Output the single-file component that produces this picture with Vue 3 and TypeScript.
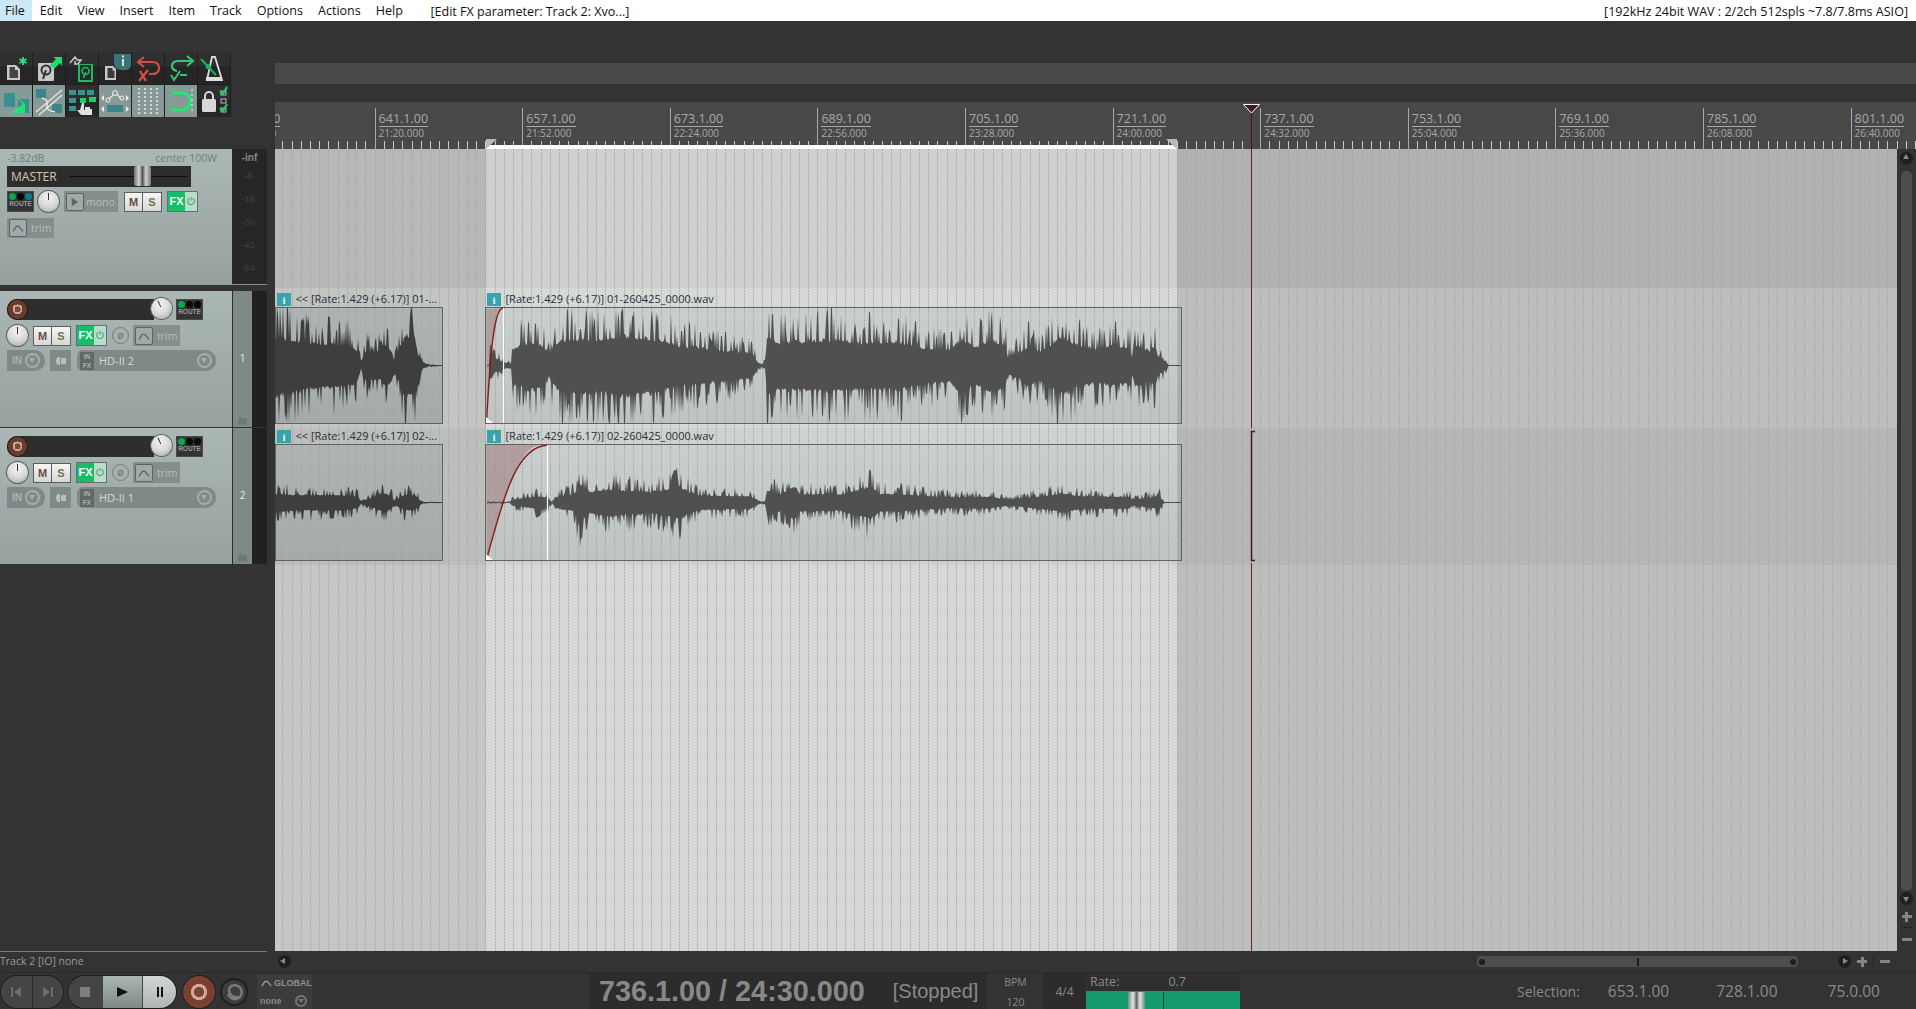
<script setup lang="ts">
import { computed } from "vue";

type Key = [number, number];

const menus = ["File", "Edit", "View", "Insert", "Item", "Track", "Options", "Actions", "Help"];
const tracks = [
  { n: 1, input: "HD-II 2" },
  { n: 2, input: "HD-II 1" },
];

const BAR_X = 374.6;
const BAR_W = 147.6;
const TICK = BAR_W / 16;

function barX(bar: number): number {
  return BAR_X + ((bar - 641) / 16) * BAR_W;
}

const rulerLabels = computed(() => {
  const out: { x: number; bar: string; time: string }[] = [];
  for (let i = 0; i < 12; i++) {
    const bar = 625 + i * 16;
    const secs = 20 * 60 + 48 + i * 32;
    const m = Math.floor(secs / 60);
    const s = String(secs % 60).padStart(2, "0");
    out.push({ x: barX(bar) - 275, bar: `${bar}.1.00`, time: `${m}:${s}.000` });
  }
  return out;
});

const ticks = computed(() => {
  const out: number[] = [];
  for (let x = BAR_X - 10 * TICK; x < 1916; x += TICK) out.push(Math.round(x) + 0.5);
  return out;
});

const gridLines = computed(() => ticks.value.filter((x) => x < 1897));

const majors = computed(() => rulerLabels.value.map((l) => Math.round(l.x + 275) + 0.5).filter((x) => x > 275));

function envAt(keys: Key[], x: number): number {
  for (let i = 1; i < keys.length; i++) {
    if (x <= keys[i][0]) {
      const [x0, a0] = keys[i - 1];
      const [x1, a1] = keys[i];
      return a0 + ((a1 - a0) * (x - x0)) / (x1 - x0 || 1);
    }
  }
  return keys[keys.length - 1][1];
}

// peak per pixel column: a solid core with thin spikes on top
function wave(keys: Key[], cy: number, half: number, seed: number): string {
  let s = seed;
  const rnd = () => {
    s = (s * 1664525 + 1013904223) % 4294967296;
    return s / 4294967296;
  };
  const peak = () => {
    const r = rnd();
    if (r > 0.62) return 0.68 + 0.5 * rnd();
    return 0.46 + 0.25 * r * r;
  };
  const x0 = keys[0][0];
  const x1 = keys[keys.length - 1][0];
  const up: string[] = [];
  const down: string[] = [];
  for (let x = x0; x <= x1; x++) {
    const e = envAt(keys, x) * half;
    const a = e * peak();
    const b = e * peak() * 1.05;
    up.push(`${x},${(cy - Math.min(half, Math.max(0.6, a))).toFixed(1)}`);
    down.unshift(`${x},${(cy + Math.min(half, Math.max(0.6, b))).toFixed(1)}`);
  }
  return `M${up.join("L")}L${down.join("L")}Z`;
}

const main1: Key[] = [[487, 0.01], [489, 0.02], [490, 0.48], [495, 0.25], [505, 0.1], [511, 0.08], [512, 0.55], [520, 0.72], [535, 0.82], [545, 0.6], [548, 0.3], [552, 0.6], [560, 0.88], [580, 0.88], [605, 0.92], [625, 1], [650, 0.92], [680, 0.68], [700, 0.62], [752, 0.42], [758, 0.1], [762, 0.05], [765, 0.1], [767, 1], [780, 0.78], [800, 0.82], [830, 0.88], [860, 0.78], [900, 0.82], [920, 0.62], [950, 0.55], [962, 0.92], [975, 0.62], [990, 0.88], [1005, 0.72], [1008, 0.3], [1020, 0.48], [1030, 0.68], [1040, 0.48], [1055, 0.82], [1060, 0.95], [1070, 0.88], [1075, 0.72], [1090, 0.62], [1100, 0.58], [1110, 0.68], [1125, 0.62], [1130, 0.68], [1132, 0.3], [1135, 0.68], [1150, 0.52], [1155, 0.68], [1158, 0.35], [1165, 0.15], [1169, 0.01], [1181, 0.01]];
const main2: Key[] = [[487, 0.02], [510, 0.02], [512, 0.1], [530, 0.18], [537, 0.22], [548, 0.16], [552, 0.02], [555, 0.15], [560, 0.22], [575, 0.3], [578, 0.68], [590, 0.36], [605, 0.46], [625, 0.42], [635, 0.42], [650, 0.36], [680, 0.56], [690, 0.36], [700, 0.25], [750, 0.22], [757, 0.08], [762, 0.03], [765, 0.05], [767, 0.42], [780, 0.3], [795, 0.56], [800, 0.3], [840, 0.28], [870, 0.56], [880, 0.3], [900, 0.3], [920, 0.25], [955, 0.18], [975, 0.2], [990, 0.2], [1008, 0.1], [1030, 0.18], [1050, 0.25], [1060, 0.32], [1080, 0.22], [1125, 0.2], [1130, 0.2], [1132, 0.1], [1155, 0.2], [1158, 0.32], [1163, 0.05], [1165, 0.01], [1181, 0.01]];
const left1: Key[] = [[275, 1], [310, 0.78], [350, 0.68], [358, 0.5], [361, 0.1], [365, 0.48], [380, 0.48], [385, 0.7], [392, 0.5], [394, 0.2], [398, 0.5], [405, 1], [415, 1], [418, 0.4], [423, 0.1], [428, 0.03], [442, 0.01]];
const left2: Key[] = [[275, 0.3], [300, 0.26], [340, 0.26], [358, 0.2], [361, 0.05], [375, 0.2], [385, 0.32], [392, 0.2], [394, 0.07], [405, 0.26], [415, 0.26], [420, 0.08], [424, 0.02], [442, 0.01]];

const waves = computed(() => ({
  main1: wave(main1, 365.5, 58, 11),
  main2: wave(main2, 502.5, 58, 29),
  left1: wave(left1, 365.5, 58, 47),
  left2: wave(left2, 502.5, 58, 73),
}));

const bands = [
  { y: 149, h: 139, c: ["#b7b8b7", "#ced0ce", "#b0b1b0"] },
  { y: 288, h: 140, c: ["#c3c5c3", "#d7d9d7", "#bdbebd"] },
  { y: 428, h: 137, c: ["#bcbebc", "#d0d2d0", "#b5b6b5"] },
  { y: 565, h: 386, c: ["#c5c7c5", "#d6d8d6", "#bdbebc"] },
];
const clips = [
  { x: 275.5, y: 307.5, w: 167, h: 116, left: true, label: "<< [Rate:1.429 (+6.17)] 01-...", labelY: 303 },
  { x: 275.5, y: 444.5, w: 167, h: 116, left: true, label: "<< [Rate:1.429 (+6.17)] 02-...", labelY: 440 },
  { x: 485.5, y: 307.5, w: 696, h: 116, left: false, label: "[Rate:1.429 (+6.17)] 01-260425_0000.wav", labelY: 303 },
  { x: 485.5, y: 444.5, w: 696, h: 116, left: false, label: "[Rate:1.429 (+6.17)] 02-260425_0000.wav", labelY: 440 },
];
</script>

<template>
  <div class="app">
    <div class="menu">
      <span v-for="m in menus" :key="m" class="menu-item" :class="{ on: m === 'File' }">{{ m }}</span>
      <span class="menu-undo">[Edit FX parameter: Track 2: Xvo...]</span>
      <span class="menu-info">[192kHz 24bit WAV : 2/2ch 512spls ~7.8/7.8ms ASIO]</span>
    </div>

    <div class="work">
      <div class="tcp">
        <div class="toolbar">
          <div class="tb">
            <svg viewBox="0 0 32 32"><path d="M7 13h9l4 4v11H7z" fill="#c8c8c8"/><path d="M9.500 15h5.500v3h3v8h-8.500z" fill="#444"/><path d="M23 5v8M19.500 7l7 4M26.500 7l-7 4" stroke="#2fe08a" stroke-width="1.800"/></svg>
          </div>
          <div class="tb">
            <svg viewBox="0 0 32 32"><rect x="5" y="11" width="16" height="18" rx="1" fill="#c8c8c8"/><circle cx="13" cy="18" r="4.500" fill="none" stroke="#333" stroke-width="2"/><path d="M13 18l-3 9" stroke="#333" stroke-width="2"/><path d="M17 13l6-6-3-2h9v9l-2-3-6 6z" fill="#1fdc6e"/></svg>
          </div>
          <div class="tb">
            <svg viewBox="0 0 32 32"><rect x="12" y="12" width="15" height="18" fill="#1fb964"/><rect x="14" y="13" width="11" height="15" fill="#2a2a2a"/><circle cx="19.500" cy="19" r="3.500" fill="none" stroke="#1fb964" stroke-width="1.600"/><path d="M19.500 20l-2 6" stroke="#1fb964" stroke-width="1.600"/><path d="M4 11l5-6 2 3h4l-3 4H9V9" fill="none" stroke="#ccc" stroke-width="1.500"/></svg>
          </div>
          <div class="tb">
            <svg viewBox="0 0 32 32"><path d="M6 14h8l3 3v11H6z" fill="#c8c8c8"/><path d="M8.500 16h5v2.500h2V26h-7z" fill="#3a3a3a"/><path d="M15 2h17v10q0 6-7 6h-3q-7-1-7-8z" fill="#3a7478"/><rect x="23" y="7" width="2" height="7" fill="#ddd"/><rect x="23" y="3.500" width="2" height="2" fill="#ddd"/></svg>
          </div>
          <div class="tb">
            <svg viewBox="0 0 32 32"><path d="M7 10h13q7 0 7 6t-7 6h-3" fill="none" stroke="#d84a45" stroke-width="2.200"/><path d="M12 5l-6 5 6 5" fill="none" stroke="#d84a45" stroke-width="2"/><path d="M8 19l6 10M16 18L7 29" stroke="#d84a45" stroke-width="2.400"/></svg>
          </div>
          <div class="tb">
            <svg viewBox="0 0 32 32"><path d="M26 9H14q-7 0-7 5 0 4 5 5" fill="none" stroke="#38c574" stroke-width="2.200"/><path d="M22 4l6 5-6 5" fill="none" stroke="#38c574" stroke-width="2"/><path d="M6 23l3 5 6-9M15 23h7" fill="none" stroke="#38c574" stroke-width="2"/></svg>
          </div>
          <div class="tb">
            <svg viewBox="0 0 32 32"><path d="M9 28L14 5h3l7 23z" fill="none" stroke="#ddd" stroke-width="1.800"/><path d="M3 7l15 16" stroke="#17b45a" stroke-width="2"/><circle cx="10" cy="14.500" r="2.500" fill="#17b45a"/><rect x="8" y="25" width="16" height="3" fill="#ddd"/></svg>
          </div>

          <div class="tb lit">
            <svg viewBox="0 0 32 32"><rect x="4" y="8" width="11" height="14" fill="#3a8f8f"/><rect x="18" y="14" width="11" height="14" fill="#3a8f8f"/><path d="M12 7l11 12-12 9h14V19z" fill="#1df06e" opacity=".9"/></svg>
          </div>
          <div class="tb lit">
            <svg viewBox="0 0 32 32"><rect x="3" y="4" width="10" height="9" fill="#3a8585"/><rect x="19" y="19" width="10" height="9" fill="#3a8585"/><path d="M3 27L29 5M6 30L29 10M9 13q7 2 5 7t8 7" fill="none" stroke="#e5e5e5" stroke-width="1.400"/></svg>
          </div>
          <div class="tb">
            <svg viewBox="0 0 32 32"><g fill="#3f8f8f"><rect x="3" y="5" width="7" height="5"/><rect x="12" y="5" width="7" height="5"/><rect x="21" y="5" width="7" height="5"/><rect x="3" y="13" width="7" height="5"/><rect x="3" y="21" width="7" height="5"/></g><rect x="14" y="13" width="6" height="5" fill="#1ad070"/><rect x="23" y="12" width="7" height="5" fill="#1ad070"/><path d="M16 18h2v7h1v-3h5v2h2v6H15l-4-5h3z" fill="#e0e0e0"/></svg>
          </div>
          <div class="tb lit">
            <svg viewBox="0 0 32 32"><path d="M9 15l6-6h3l5 6" fill="none" stroke="#eee" stroke-width="1.200"/><circle cx="9" cy="15" r="2" fill="#879a98" stroke="#eee"/><circle cx="16" cy="8" r="2.400" fill="#879a98" stroke="#eee"/><circle cx="23" cy="13" r="2" fill="#879a98" stroke="#eee"/><path d="M5 10l-3 3 3 3zM27 10l3 3-3 3zM5 21l-3 3 3 3zM27 21l3 3-3 3z" fill="#eee"/><rect x="8" y="20" width="16" height="7" fill="#3a8585"/></svg>
          </div>
          <div class="tb lit">
            <svg viewBox="0 0 32 32"><path d="M7 3v26M13 3v26M19 3v26M25 3v26" stroke="#e8e8e8" stroke-width="1.600" stroke-dasharray="2 2"/></svg>
          </div>
          <div class="tb lit">
            <svg viewBox="0 0 32 32"><path d="M8 8h9a8 8 0 0 1 0 17H8" fill="none" stroke="#1bec70" stroke-width="3"/><path d="M6 4v25" stroke="#1bec70" stroke-width="1.500" stroke-dasharray="2 3"/><path d="M27 4v25" stroke="#cfe" stroke-width="1" stroke-dasharray="2 3"/></svg>
          </div>
          <div class="tb">
            <svg viewBox="0 0 32 32"><rect x="4" y="14" width="14" height="13" rx="1.500" fill="#d8d8d8"/><path d="M7 14v-3a4 4 0 0 1 8 0v3" fill="none" stroke="#d8d8d8" stroke-width="2"/><g fill="none" stroke="#bbb"><rect x="23" y="6" width="5" height="4"/><rect x="23" y="14" width="5" height="4"/><rect x="23" y="23" width="5" height="4"/></g><path d="M22 6l3 3 4-7M22 23l3 3 4-7" fill="none" stroke="#1bd468" stroke-width="2"/></svg>
          </div>
        </div>

        <div class="master">
          <div class="master-strip">
            <div class="master-top"><span>-3.82dB</span><span>center 100W</span></div>
            <div class="master-fader">
              <span class="master-name">MASTER</span>
              <span class="fader-line"><i class="fader-thumb"></i></span>
            </div>
            <div class="row master-row">
              <div class="route">
                <div class="leds"><i class="g"></i><i></i><i class="b"></i></div>
                <b>ROUTE</b>
              </div>
              <div class="knob"><i></i></div>
              <div class="tag mono">
                <span class="tag-btn"><svg viewBox="0 0 12 12"><path d="M2 1v10l8-5z" fill="#5d6665"/></svg></span>
                <em>mono</em>
              </div>
              <div class="ms"><span class="m">M</span><span class="s">S</span></div>
              <div class="fx"><b>FX</b><span>⏻</span></div>
            </div>
            <div class="row master-row2">
              <div class="tag">
                <span class="tag-btn"><svg viewBox="0 0 14 12"><path d="M1 10l4-6h3l5 6" fill="none" stroke="#5b6463" stroke-width="1.600"/></svg></span>
                <em>trim</em>
              </div>
            </div>
          </div>
          <div class="meter">
            <span class="inf">-inf</span>
            <span>-6-</span><span>-18-</span><span>-30-</span><span>-42-</span><span>-54-</span>
          </div>
        </div>

        <div v-for="t in tracks" :key="t.n" class="track">
          <div class="track-strip">
            <div class="row r1">
              <div class="arm-bar">
                <span class="rec"></span>
                <div class="knob vol"><i></i></div>
              </div>
              <div class="route small">
                <div class="leds"><i class="g"></i><i></i><i></i></div>
                <b>ROUTE</b>
              </div>
            </div>
            <div class="row r2">
              <div class="knob"><i></i></div>
              <div class="ms"><span class="m">M</span><span class="s">S</span></div>
              <div class="fx"><b>FX</b><span>⏻</span></div>
              <span class="phase">ø</span>
              <div class="tag">
                <span class="tag-btn"><svg viewBox="0 0 14 12"><path d="M1 10l4-6h3l5 6" fill="none" stroke="#5b6463" stroke-width="1.600"/></svg></span>
                <em>trim</em>
              </div>
            </div>
            <div class="row r3">
              <div class="in-pill"><b>IN</b><span class="drop"></span></div>
              <div class="mon"><svg viewBox="0 0 12 14"><path d="M4 3Q1 3 1 7t3 4h1V3zM6 4h5v6H6z" fill="#b7c0bf"/></svg></div>
              <div class="input-pill">
                <span class="in-fx">IN<br />FX</span>
                <span class="input-name">{{ t.input }}</span>
                <span class="drop"></span>
              </div>
            </div>
          </div>
          <div class="track-num">
            <span>{{ t.n }}</span>
            <svg class="folder" viewBox="0 0 10 8"><path d="M0 0h5l1 1h4v7H0z" fill="#6e7877"/></svg>
          </div>
          <div class="track-dark"></div>
        </div>

        <div class="tcp-spacer"></div>
        <div class="tcp-status">Track 2 [IO] none</div>
      </div>

      <div class="main">
        <div class="strip"></div>
        <div class="ruler">
          <svg class="ruler-svg" width="1641" height="47" viewBox="275 102 1641 47">
            <path v-for="x in ticks" :key="x" :d="`M${x} 141V149`" stroke="#c9c9c9" />
            <path v-for="x in majors" :key="'m' + x" :d="`M${x} 108V149`" stroke="#a9a9a9" />
            <rect x="486" y="145" width="691" height="4" fill="#fff" />
            <path d="M486 149V139H497zM1177 149V139H1166z" fill="#b9b9b9" />
            <path d="M1243.500 104.500H1259.500L1251.500 113z" fill="#46181c" stroke="#fff" />
            <path d="M1251.500 113V149" stroke="#46181c" stroke-width="1" />
          </svg>
          <div v-for="l in rulerLabels" :key="l.bar" class="ruler-label" :style="{ left: l.x + 4 + 'px' }">
            <span class="bar">{{ l.bar }}</span>
            <span class="time">{{ l.time }}</span>
          </div>
        </div>

        <div class="canvas-row">
          <svg class="arrange" width="1622" height="802" viewBox="275 149 1622 802">
            <defs>
              <linearGradient id="clipA" x1="0" y1="0" x2="0" y2="1">
                <stop offset="0" stop-color="#c9cfcf" /><stop offset="1" stop-color="#bfc4c3" />
              </linearGradient>
              <linearGradient id="clipB" x1="0" y1="0" x2="0" y2="1">
                <stop offset="0" stop-color="#adb4b3" /><stop offset="1" stop-color="#a5abaa" />
              </linearGradient>
            </defs>
            <g v-for="b in bands" :key="b.y">
              <rect x="275" :y="b.y" width="211" :height="b.h" :fill="b.c[0]" />
              <rect x="486" :y="b.y" width="691" :height="b.h" :fill="b.c[1]" />
              <rect x="1177" :y="b.y" width="720" :height="b.h" :fill="b.c[2]" />
            </g>

            <rect v-for="c in clips" :key="'r' + c.label" :x="c.x" :y="c.y" :width="c.w" :height="c.h" :fill="c.left ? 'url(#clipB)' : 'url(#clipA)'" />
            <path v-for="x in gridLines" :key="x" :d="`M${x} 149V951`" stroke="#a2a4a2" stroke-opacity=".75" stroke-dasharray="2 1" />
            <rect x="1178" y="308" width="3" height="115" fill="#6b6f6e" opacity=".3" />
            <rect x="1178" y="445" width="3" height="115" fill="#6b6f6e" opacity=".3" />

            <g v-for="c in clips" :key="c.label">
              <rect :x="c.x" :y="c.y" :width="c.w" :height="c.h" fill="none" stroke="#5f6362" />
              <rect :x="c.x + 1.500" :y="c.labelY - 10" width="14" height="13" fill="#39a3ab" />
              <text :x="c.x + 8.500" :y="c.labelY + 1" class="info">i</text>
              <text :x="c.x + 20" :y="c.labelY" class="clip-label">{{ c.label }}</text>
            </g>

            <path d="M486 308.500H502C497 309 491 340 486.500 423Z" fill="#a88f8f" opacity=".75" />
            <path d="M486 445H540C520 446 505 490 486.500 560Z" fill="#a88f8f" opacity=".75" />

            <path :d="waves.left1" fill="#3e3e3e" />
            <path :d="waves.left2" fill="#3e3e3e" />
            <path :d="waves.main1" fill="#505050" />
            <path :d="waves.main2" fill="#505050" />

            <path d="M503 308C495 309 491 340 486.500 423" fill="none" stroke="#8a1a1c" stroke-width="1.400" />
            <path d="M548 445C518 446 505 490 486.500 560" fill="none" stroke="#8a1a1c" stroke-width="1.400" />
            <path d="M503.500 308V423M547.500 445V560" stroke="#fff" stroke-width="1.200" />
            <path d="M486 423V417L493 423zM486 560V554L493 560z" fill="#fff" />

            <path d="M1251.500 149V428M1251.500 563V951" stroke="#6a1c20" />
            <path d="M1255 431.500H1251.500V560.500H1255" fill="none" stroke="#4c1518" stroke-width="1.500" />
          </svg>
          <div class="vscroll">
            <span class="round up"></span>
            <span class="v-thumb"></span>
            <span class="round down"></span>
            <span class="plus"></span>
            <span class="v-sep"></span>
            <span class="minus"></span>
          </div>
        </div>

        <div class="hscroll">
          <span class="round left"></span>
          <div class="h-track"><i></i><i class="mid"></i><i></i></div>
          <span class="round right"></span>
          <span class="plus"></span>
          <span class="h-sep"></span>
          <span class="minus"></span>
        </div>
      </div>
    </div>

    <div class="transport">
      <div class="t-buttons">
        <div class="pill nav">
          <span><svg viewBox="0 0 14 14"><path d="M2 2h2v10H2zM12 2v10L5 7z" fill="#6e6e6e"/></svg></span>
          <span><svg viewBox="0 0 14 14"><path d="M10 2h2v10h-2zM2 2v10l7-5z" fill="#6e6e6e"/></svg></span>
        </div>
        <div class="pill playback">
          <span class="stop"><i></i></span>
          <span class="play"><svg viewBox="0 0 14 14"><path d="M2 2v10l11-5z" fill="#111"/></svg></span>
          <span class="pause"><svg viewBox="0 0 14 14"><path d="M4 2h2v10H4zM8 2h2v10H8z" fill="#111"/></svg></span>
        </div>
        <span class="t-rec"></span>
        <span class="t-repeat">
          <svg viewBox="0 0 24 24"><path d="M8 7a7 7 0 1 1-2 7M16 17a7 7 0 0 1-8-10" fill="none" stroke="#7c7c7c" stroke-width="2.400"/></svg>
        </span>
        <div class="global">
          <div class="g-top"><svg viewBox="0 0 14 10"><path d="M1 9l4-6h3l5 6" fill="none" stroke="#999" stroke-width="1.800"/></svg>GLOBAL</div>
          <div class="g-bot"><span>none</span><span class="drop dark"></span></div>
        </div>
      </div>

      <div class="clock">
        <span class="clock-main">736.1.00 / 24:30.000</span>
        <span class="clock-state">[Stopped]</span>
      </div>
      <div class="bpm"><span>BPM</span><span>120</span></div>
      <div class="sig">4/4</div>
      <div class="rate">
        <div class="rate-top"><span>Rate:</span><span class="rate-val">0.7</span></div>
        <div class="rate-bar"><i class="rate-thumb"></i><i class="rate-mark"></i></div>
      </div>
      <div class="sel">
        <span class="sel-label">Selection:</span>
        <span class="sel-a">653.1.00</span>
        <span class="sel-b">728.1.00</span>
        <span class="sel-c">75.0.00</span>
      </div>
    </div>
  </div>
</template>

<style>
html,
body {
  margin: 0;
  background: #333;
  overflow: hidden;
}
</style>

<style scoped>
.app {
  width: 1916px;
  height: 1009px;
  display: flex;
  flex-direction: column;
  background: #333;
  font-family: "Open Sans", "Liberation Sans", sans-serif;
  overflow: hidden;
}

.menu {
  height: 21px;
  flex: none;
  background: #fff;
  display: flex;
  align-items: center;
  font-size: 12.55px;
  color: #111;
}

.menu-item {
  height: 21px;
  line-height: 22px;
  padding: 0 7.5px;
}

.menu-item.on {
  background: #cce8f4;
  padding: 0 7.5px 0 5px;
}

.menu-undo {
  margin-left: 20px;
  padding-top: 1px;
}

.menu-info {
  margin-left: auto;
  margin-right: 8px;
  padding-top: 1px;
}

.work {
  flex: 1;
  min-height: 0;
  display: flex;
}

.tcp {
  width: 275px;
  flex: none;
  display: flex;
  flex-direction: column;
  padding-top: 31px;
  box-sizing: border-box;
}

.toolbar {
  width: 231px;
  height: 65px;
  display: grid;
  grid-template-columns: repeat(7, 32px);
  grid-auto-rows: 32px;
  gap: 1px;
  background: #1e1e1e;
  flex: none;
}

.tb {
  background: linear-gradient(#2f2f2f, #2f2f2f 45%, #262626 45%);
  display: flex;
}

.tb.lit {
  background: #879a98;
}

.tb svg {
  width: 32px;
  height: 32px;
}

.master {
  margin-top: 32px;
  height: 136px;
  display: flex;
  flex: none;
}

.master-strip {
  width: 232px;
  background: linear-gradient(#acb8b6, #96a19f);
  padding: 0 7px;
  box-sizing: border-box;
}

.master-top {
  height: 17px;
  display: flex;
  justify-content: space-between;
  padding-right: 8px;
  font-size: 10.5px;
  line-height: 18px;
  color: #737c7b;
}

.master-fader {
  width: 184px;
  height: 21px;
  background: #2d2d2d;
  display: flex;
  align-items: center;
}

.master-name {
  width: 63px;
  padding-left: 4px;
  box-sizing: border-box;
  font-size: 12px;
  color: #d9c6a6;
}

.fader-line {
  position: relative;
  width: 117px;
  height: 1px;
  background: #0c0c0c;
}

.fader-thumb {
  position: absolute;
  left: 64px;
  top: -10px;
  width: 17px;
  height: 20px;
  border-radius: 2px;
  background: linear-gradient(90deg, #6f6f6f, #d5d5d5 30%, #555 50%, #d0d0d0 70%, #777);
}

.row {
  display: flex;
  align-items: center;
}

.master-row {
  margin-top: 4px;
  height: 21px;
}

.master-row2 {
  margin-top: 5px;
  height: 21px;
}

.route {
  width: 27px;
  height: 21px;
  background: #333;
  border: 1px solid #4a4a4a;
  box-sizing: border-box;
  display: flex;
  flex-direction: column;
  align-items: center;
  flex: none;
}

.route b {
  font: 700 6.5px/8px "Liberation Sans", sans-serif;
  color: #9a9a9a;
}

.leds {
  display: flex;
  gap: 1px;
  margin-top: 1px;
}

.leds i {
  width: 7px;
  height: 7px;
  border-radius: 50%;
  background: #090909;
}

.leds .g {
  background: #07a84f;
}

.leds .b {
  background: #0a7d95;
}

.knob {
  position: relative;
  width: 21px;
  height: 21px;
  border-radius: 50%;
  flex: none;
  background: radial-gradient(circle at 50% 30%, #f4f4f4, #d6d6d6 55%, #9c9c9c);
  box-shadow: 0 0 0 1px #5a6160;
}

.knob i {
  position: absolute;
  left: 10px;
  top: 2px;
  width: 1px;
  height: 7px;
  background: #333;
}

.master-row .knob {
  margin-left: 4px;
}

.tag {
  display: flex;
  align-items: center;
  gap: 4px;
  height: 20px;
  width: 47px;
  background: #848e8d;
  box-sizing: border-box;
  padding-left: 2px;
  flex: none;
}

.tag.mono {
  width: 54px;
  height: 21px;
  margin-left: 5px;
  gap: 2px;
}

.tag em {
  font-style: normal;
  font-size: 10.5px;
  color: #b5bebd;
}

.tag-btn {
  width: 16px;
  height: 16px;
  border: 1px solid #5b6463;
  border-radius: 2px;
  background: #a1aaa9;
  display: flex;
  align-items: center;
  justify-content: center;
  flex: none;
}

.tag-btn svg {
  width: 12px;
  height: 10px;
}

.ms {
  display: flex;
  height: 20px;
  margin-left: 6px;
  flex: none;
}

.ms span {
  width: 19px;
  box-sizing: border-box;
  border: 1px solid #5a5f5e;
  background: linear-gradient(#f5f5f3, #d7d7d5);
  font: 700 11px/18px "Liberation Sans", sans-serif;
  text-align: center;
}

.ms .m {
  color: #6c4a40;
}

.ms .s {
  color: #72724c;
  border-left: 0;
}

.fx {
  display: flex;
  width: 31px;
  height: 21px;
  margin-left: 5px;
  flex: none;
  border: 1px solid #646e6c;
  box-sizing: border-box;
}

.fx b {
  width: 17px;
  background: #17bd67;
  color: #fff;
  font: 700 11px/19px "Liberation Sans", sans-serif;
  text-align: center;
}

.fx span {
  flex: 1;
  background: #bcdccb;
  color: #1c9f5c;
  font: 10px/19px "DejaVu Sans", sans-serif;
  text-align: center;
}

.meter {
  width: 35px;
  background: #262626;
  display: flex;
  flex-direction: column;
  align-items: center;
  padding-top: 2px;
  box-sizing: border-box;
  font: 700 9px/23px "Liberation Sans", sans-serif;
  color: #3a3a3a;
  border-bottom: 1px solid #8a8a8a;
}

.meter .inf {
  color: #8a8a8a;
  font-size: 10px;
  line-height: 14px;
}

.track {
  display: flex;
  height: 137px;
  flex: none;
  border-bottom: 1px solid #333;
  box-sizing: border-box;
}

.master + .track {
  margin-top: 6px;
}

.track-strip {
  width: 232px;
  background: linear-gradient(#abb7b5, #97a2a0);
  padding: 8px 7px 0;
  box-sizing: border-box;
  flex: none;
}

.r1 {
  height: 21px;
}

.r2 {
  margin-top: 5px;
  height: 21px;
}

.r3 {
  margin-top: 4px;
  height: 21px;
}

.arm-bar {
  position: relative;
  width: 147px;
  height: 21px;
  background: #2e2e2e;
  border-radius: 10px 0 0 10px;
  flex: none;
}

.rec {
  position: absolute;
  left: 1px;
  top: 1px;
  width: 19px;
  height: 19px;
  border-radius: 50%;
  box-sizing: border-box;
  background: radial-gradient(circle, #7a4a38 0 3px, #c8a595 3px 5px, #6c3c2b 5px);
  box-shadow: 0 0 0 1px #1d1d1d;
}

.vol {
  position: absolute;
  right: -18px;
  top: -1px;
  transform: rotate(-25deg);
}

.route.small {
  margin-left: 22px;
}

.r2 .ms {
  margin-left: 5px;
}

.phase {
  width: 17px;
  height: 17px;
  margin-left: 5px;
  border-radius: 50%;
  background: #a7b0af;
  border: 1px solid #747d7c;
  box-sizing: border-box;
  font: 10px/15px "DejaVu Sans", sans-serif;
  text-align: center;
  color: #6a7372;
  flex: none;
}

.r2 .tag {
  margin-left: 4px;
  height: 21px;
}

.in-pill {
  width: 38px;
  height: 21px;
  background: #7f8988;
  border-radius: 0 10px 10px 0;
  display: flex;
  align-items: center;
  gap: 3px;
  padding-left: 5px;
  box-sizing: border-box;
  flex: none;
}

.in-pill b {
  font: 700 10px "Liberation Sans", sans-serif;
  color: #abb4b3;
}

.drop {
  position: relative;
  width: 15px;
  height: 15px;
  border-radius: 50%;
  border: 2px solid #a6afae;
  box-sizing: border-box;
  flex: none;
}

.drop::after {
  content: "";
  position: absolute;
  left: 2px;
  top: 3px;
  border: 3.5px solid transparent;
  border-top: 5px solid #a6afae;
  border-bottom: 0;
}

.mon {
  width: 21px;
  height: 21px;
  margin-left: 5px;
  background: #7f8988;
  display: flex;
  align-items: center;
  justify-content: center;
  flex: none;
}

.mon svg {
  width: 12px;
  height: 14px;
}

.input-pill {
  width: 139px;
  height: 21px;
  margin-left: 6px;
  background: #7f8988;
  border-radius: 6px 10px 10px 6px;
  display: flex;
  align-items: center;
  padding: 0 4px 0 3px;
  box-sizing: border-box;
  flex: none;
}

.in-fx {
  width: 14px;
  height: 18px;
  background: #5f6968;
  color: #aab3b2;
  font: 700 6.5px/9px "Liberation Sans", sans-serif;
  text-align: center;
  flex: none;
}

.input-name {
  margin-left: 5px;
  font-size: 11px;
  color: #d8d9d2;
  flex: 1;
}

.track-num {
  position: relative;
  width: 20px;
  background: #7e8988;
  border-left: 1px solid #2c2c2c;
  box-sizing: border-box;
  color: #e8e8e8;
  font-size: 10px;
  text-align: center;
  padding-top: 60px;
  flex: none;
}

.folder {
  position: absolute;
  left: 5px;
  bottom: 2px;
  width: 9px;
  height: 8px;
}

.track-dark {
  width: 15px;
  background: #212121;
  flex: none;
}

.tcp-spacer {
  flex: 1;
}

.tcp-status {
  height: 20px;
  width: 267px;
  flex: none;
  border-top: 1px solid #7a7a7a;
  box-sizing: content-box;
  font-size: 10.5px;
  line-height: 18px;
  color: #9a9a9a;
}

.main {
  width: 1641px;
  flex: none;
  display: flex;
  flex-direction: column;
  padding-top: 42px;
  box-sizing: border-box;
}

.strip {
  height: 21px;
  background: #484848;
  flex: none;
}

.ruler {
  position: relative;
  height: 47px;
  margin-top: 18px;
  background: #484848;
  overflow: hidden;
  flex: none;
}

.ruler-svg {
  position: absolute;
  inset: 0;
}

.ruler-label {
  position: absolute;
  top: 9px;
  display: flex;
  flex-direction: column;
  color: #a9a9a9;
}

.bar {
  font-size: 12.5px;
  line-height: 15px;
  border-bottom: 1px solid #a9a9a9;
  white-space: nowrap;
}

.time {
  font-size: 10px;
  line-height: 13px;
  white-space: nowrap;
}

.canvas-row {
  display: flex;
  height: 802px;
  flex: none;
}

.arrange {
  display: block;
  flex: none;
}

.clip-label {
  font-family: "Open Sans", sans-serif;
  font-size: 11px;
  fill: #26303a;
}

.info {
  font: 700 11px "Liberation Serif", serif;
  fill: #e6f4f4;
  text-anchor: middle;
}

.vscroll {
  width: 19px;
  display: flex;
  flex-direction: column;
  align-items: center;
  padding-top: 3px;
  box-sizing: border-box;
}

.round {
  position: relative;
  width: 13px;
  height: 13px;
  border-radius: 50%;
  background: #1f1f1f;
  flex: none;
}

.round::after {
  content: "";
  position: absolute;
  left: 3px;
  border: 3.5px solid transparent;
}

.round.up::after {
  top: -1px;
  border-bottom: 5px solid #8a8a8a;
}

.round.down::after {
  top: 5px;
  border-top: 5px solid #8a8a8a;
}

.round.left::after {
  left: -1px;
  top: 3px;
  border-right: 5px solid #8a8a8a;
}

.round.right::after {
  left: 5px;
  top: 3px;
  border-left: 5px solid #8a8a8a;
}

.v-thumb {
  width: 11px;
  height: 720px;
  margin-top: 6px;
  background: #4d4d4d;
  border-radius: 5px;
  flex: none;
}

.round.down {
  margin-top: 1px;
}

.plus,
.minus {
  position: relative;
  width: 10px;
  height: 3px;
  background: #858585;
  flex: none;
}

.plus::after {
  content: "";
  position: absolute;
  left: 3.5px;
  top: -3.5px;
  width: 3px;
  height: 10px;
  background: #858585;
}

.vscroll .plus {
  margin-top: 10px;
}

.v-sep {
  width: 10px;
  height: 1px;
  margin-top: 9px;
  background: #222;
  flex: none;
}

.vscroll .minus {
  margin-top: 10px;
}

.hscroll {
  height: 21px;
  display: flex;
  align-items: center;
  padding-left: 3px;
  box-sizing: border-box;
  flex: none;
}

.h-track {
  width: 321px;
  height: 11px;
  margin-left: 1186px;
  background: #4d4d4d;
  border-radius: 4px;
  display: flex;
  align-items: center;
  justify-content: space-between;
  padding: 0 2px;
  box-sizing: border-box;
  flex: none;
}

.h-track i {
  width: 6px;
  height: 6px;
  border-radius: 50%;
  background: #1d1d1d;
}

.h-track .mid {
  width: 2px;
  height: 8px;
  border-radius: 0;
}

.hscroll .round.right {
  margin-left: 40px;
}

.hscroll .plus {
  margin-left: 6px;
}

.h-sep {
  width: 1px;
  height: 9px;
  margin-left: 6px;
  background: #222;
  flex: none;
}

.hscroll .minus {
  margin-left: 6px;
}

.transport {
  height: 37px;
  flex: none;
  display: flex;
  align-items: stretch;
  border-top: 1px solid #282828;
  box-sizing: border-box;
  color: #8a8a8a;
}

.t-buttons {
  width: 590px;
  display: flex;
  align-items: center;
  padding: 2px 0 0 1px;
  box-sizing: border-box;
  flex: none;
}

.pill {
  display: flex;
  height: 32px;
  border-radius: 16px;
  overflow: hidden;
  background: #444;
  box-shadow: 0 0 0 1px #1e1e1e;
  flex: none;
}

.pill span {
  display: flex;
  align-items: center;
  justify-content: center;
}

.pill svg {
  width: 14px;
  height: 14px;
}

.nav {
  width: 62px;
}

.nav span {
  width: 31px;
}

.nav span + span {
  border-left: 1px solid #282828;
}

.playback {
  width: 108px;
  margin-left: 5px;
}

.playback .stop {
  width: 35px;
}

.stop i {
  width: 10px;
  height: 10px;
  background: #7e7e7e;
}

.playback .play {
  width: 40px;
  background: linear-gradient(#aab6b4, #7f8a88);
}

.playback .pause {
  width: 33px;
  margin-left: 1px;
  background: linear-gradient(#d0d6d5, #aeb6b5);
}

.t-rec {
  width: 32px;
  height: 32px;
  margin-left: 7px;
  border-radius: 50%;
  background: radial-gradient(circle, #7a4433 0 5px, #d0a898 5px 8px, #7b4030 8px);
  box-shadow: 0 0 0 1px #1f1f1f;
  flex: none;
}

.t-repeat {
  width: 24px;
  height: 24px;
  margin-left: 7px;
  border-radius: 50%;
  background: #3d3d3d;
  box-shadow: 0 0 0 2px #1f1f1f;
  flex: none;
}

.t-repeat svg {
  display: block;
  width: 24px;
  height: 24px;
}

.global {
  width: 55px;
  height: 35px;
  margin-left: 11px;
  background: #3c3c3c;
  flex: none;
}

.g-top {
  display: flex;
  align-items: center;
  gap: 2px;
  height: 17px;
  padding-left: 4px;
  font: 700 9px "Liberation Sans", sans-serif;
  color: #8f8f8f;
}

.g-top svg {
  width: 13px;
  height: 10px;
}

.g-bot {
  display: flex;
  align-items: center;
  justify-content: space-between;
  padding: 0 5px 0 3px;
  height: 18px;
  font: 700 9px "Liberation Sans", sans-serif;
}

.drop.dark {
  width: 12px;
  height: 12px;
  border-color: #777;
}

.drop.dark::after {
  left: 1px;
  top: 2px;
  border-width: 3px;
  border-top: 4px solid #777;
  border-bottom: 0;
}

.clock {
  width: 397px;
  background: #2c2c2c;
  display: flex;
  align-items: center;
  padding-left: 9px;
  box-sizing: border-box;
  flex: none;
}

.clock-main {
  font: 700 28.8px "Liberation Sans", sans-serif;
  color: #888;
  white-space: nowrap;
}

.clock-state {
  margin-left: 28px;
  font: 20px "Liberation Sans", sans-serif;
  white-space: nowrap;
}

.bpm {
  width: 55px;
  margin-left: 1px;
  display: flex;
  flex-direction: column;
  align-items: center;
  justify-content: space-between;
  padding: 2px 0 0;
  box-sizing: border-box;
  font-size: 10.5px;
  flex: none;
}

.sig {
  width: 43px;
  background: #2c2c2c;
  text-align: center;
  font-size: 12px;
  line-height: 37px;
  flex: none;
}

.rate {
  width: 154px;
  display: flex;
  flex-direction: column;
  flex: none;
}

.rate-top {
  height: 18px;
  padding-left: 4px;
  font-size: 12.5px;
  display: flex;
  background: #2f2f2f;
}

.rate-val {
  margin-left: 49px;
}

.rate-bar {
  position: relative;
  flex: 1;
  background: #159a6c;
}

.rate-thumb {
  position: absolute;
  left: 42px;
  top: 1px;
  width: 17px;
  height: 18px;
  border-radius: 2px;
  background: linear-gradient(90deg, #6f8f83, #e5e5e5 30%, #666 50%, #e5e5e5 70%, #6f8f83);
}

.rate-mark {
  position: absolute;
  left: 77px;
  top: 1px;
  width: 1px;
  height: 18px;
  background: #0b3c2c;
}

.sel {
  position: relative;
  flex: 1;
  display: flex;
  align-items: center;
  font-size: 15.5px;
}

.sel-label {
  margin-left: 277px;
  font-size: 14px;
}

.sel-a {
  margin-left: 28px;
}

.sel-b {
  margin-left: 47px;
}

.sel-c {
  margin-left: 50px;
}
</style>
